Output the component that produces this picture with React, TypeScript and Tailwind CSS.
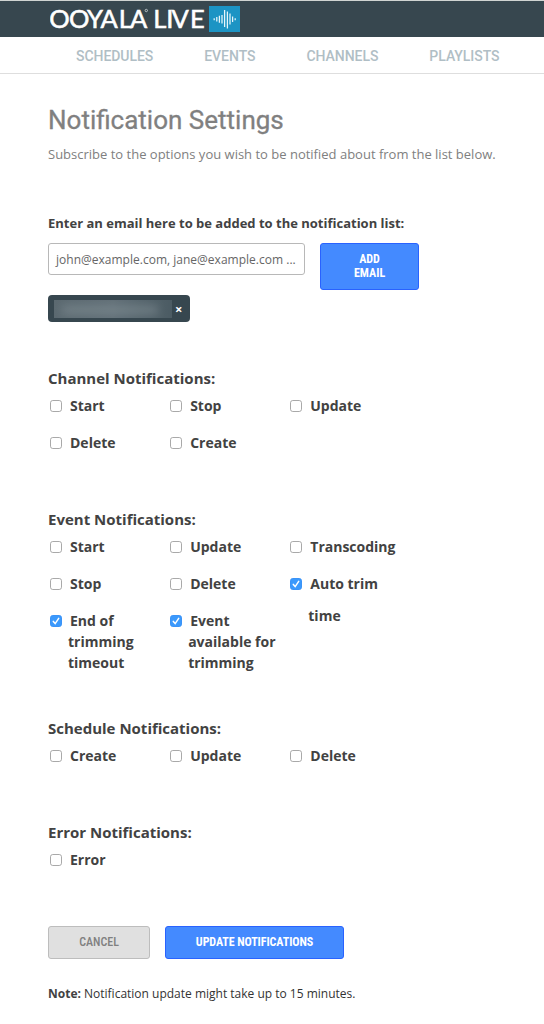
import React from "react";

const OPEN = "font-['Open_Sans','Noto_Sans',sans-serif]";
const CONDENSED = "font-['Roboto_Condensed','Roboto',sans-serif] [font-stretch:75%]";

function Box({ checked = false }: { checked?: boolean }) {
  return (
    <svg className="mt-[5px] ml-[2px] block h-3 w-3 shrink-0" viewBox="0 0 12 12">
      <rect x="0.5" y="0.5" width="11" height="11" rx="2.3" fill={checked ? "#3b99fc" : "#fff"} stroke={checked ? "#3b93f7" : "#a9a9a9"} />
      {checked && <path d="M3.3 6.4 5.2 8.6 8.7 3.4" fill="none" stroke="#fff" strokeWidth="1.5" strokeLinecap="round" />}
    </svg>
  );
}

type Item = { lines: string[]; checked?: boolean; loose?: boolean };

function Option({ lines, checked, loose }: Item) {
  return (
    <label className="flex w-[120.15px]">
      <Box checked={checked} />
      <span className={`block pl-[6px] text-[14px] whitespace-nowrap ${loose ? "-mt-[5.5px] leading-8" : "leading-[21px]"}`}>
        {lines.map((line, i) => (
          <span key={line} className={i === 0 ? "block pl-[2px]" : "block"}>{line}</span>
        ))}
      </span>
    </label>
  );
}

function Section({ title, rows, className }: { title: string; rows: Item[][]; className: string }) {
  return (
    <section className={`font-bold text-[#424242] ${className}`}>
      <h2 className="mb-[6px] text-[15px] leading-[22px]">{title}</h2>
      {rows.map((row, i) => (
        <div key={i} className="flex h-[37px] items-start">
          {row.map((item) => (
            <Option key={item.lines[0]} {...item} />
          ))}
        </div>
      ))}
    </section>
  );
}

function Logo() {
  return (
    <svg className="block h-[36px] w-[190px]" viewBox="50 1 190 36">
      <g fill="#fff" stroke="#fff" strokeWidth=".55" fontFamily="Lato, sans-serif" fontSize="25.5">
        <text y="28" x="49.2 69 87 100.5 118.8 130">OOYALA</text>
        <text y="28" x="153.3 166.3 171.5 190">LIVE</text>
      </g>
      <circle cx="146.3" cy="10.5" r="1.2" fill="none" stroke="#cfd5d8" strokeWidth=".8" />
      <rect x="209" y="6" width="31" height="26" fill="#1c94c4" />
      <path d="M214.2 18.2v2M216.8 17v4.5M219.4 15.8v7M222 15v8.5M224.6 10v17M227.4 11.5v17M230 13.5v11M232.6 16.5v5.5M235.2 18.2v2" stroke="#e6f5fa" strokeWidth="1.25" />
    </svg>
  );
}

export default function App() {
  return (
    <div className={`h-[1024px] w-[544px] overflow-hidden bg-white ${OPEN}`}>
      <header className="h-[37px] border-t border-[#d0d4d2] bg-[#37474f] pl-[50px]">
        <Logo />
      </header>
      <nav className="flex h-[37px] gap-[51px] border-b border-[#dedede] pl-[76px] font-['Roboto',sans-serif] text-[14px] leading-[38px] font-medium tracking-[-0.05px] text-[#b0bec5]">
        <a>SCHEDULES</a>
        <a>EVENTS</a>
        <a>CHANNELS</a>
        <a>PLAYLISTS</a>
      </nav>
      <main className="pl-12">
        <h1 className="h-[70px] pt-[29px] font-['Roboto',sans-serif] text-[26px] leading-[34px] text-[#808080] [-webkit-text-stroke:0.3px_#808080]">Notification Settings</h1>
        <p className="h-[69px] text-[13px] leading-[20px] text-[#808080]">Subscribe to the options you wish to be notified about from the list below.</p>
        <p className="h-[30px] text-[13px] leading-5 font-bold text-[#424242]">Enter an email here to be added to the notification list:</p>
        <div className="flex h-[52px] items-start">
          <div className="h-8 w-[257px] rounded-[3px] border border-[#b8b8b8] pl-[7px] text-[12px] leading-[31px] tracking-[0.01px] whitespace-nowrap text-[#666]">john@example.com, jane@example.com ...</div>
          <button className={`ml-[15px] h-[47px] w-[99px] rounded-[3px] border border-[#2962ff] bg-[#448aff] pb-[2px] text-center text-[12px] leading-[14px] font-bold text-white ${CONDENSED}`}>
            ADD<br />EMAIL
          </button>
        </div>
        <div className="flex h-[27px] w-[142px] items-center rounded-[4px] bg-[#37474f] pl-[6px] text-white">
          <div className="h-[18px] w-[118px] overflow-hidden bg-gradient-to-r from-[#5b6970] via-[#627078] to-[#4b5b63]">
            <div className="mt-[6px] ml-[8px] h-[8px] w-[96px] bg-[#87949a] opacity-50 blur-[4px]" />
          </div>
          <span className="ml-[3px] pt-[1px] text-[13px] leading-none font-bold">×</span>
        </div>
        <Section className="mt-[45px] h-[141px]" title="Channel Notifications:" rows={[
          [{ lines: ["Start"] }, { lines: ["Stop"] }, { lines: ["Update"] }],
          [{ lines: ["Delete"] }, { lines: ["Create"] }],
        ]} />
        <Section className="h-[209px]" title="Event Notifications:" rows={[
          [{ lines: ["Start"] }, { lines: ["Update"] }, { lines: ["Transcoding"] }],
          [{ lines: ["Stop"] }, { lines: ["Delete"] }, { lines: ["Auto trim", "time"], checked: true, loose: true }],
          [{ lines: ["End of", "trimming", "timeout"], checked: true }, { lines: ["Event", "available for", "trimming"], checked: true }],
        ]} />
        <Section className="h-[104px]" title="Schedule Notifications:" rows={[[{ lines: ["Create"] }, { lines: ["Update"] }, { lines: ["Delete"] }]]} />
        <Section className="h-[105px]" title="Error Notifications:" rows={[[{ lines: ["Error"] }]]} />
        <div className={`flex gap-[15px] text-[12px] ${CONDENSED}`}>
          <button className="h-[33px] w-[102px] rounded-[3px] border border-[#bdbdbd] bg-[#e0e0e0] pb-[2px] font-medium text-[#808080]">CANCEL</button>
          <button className="h-[33px] w-[179px] rounded-[3px] border border-[#2962ff] bg-[#448aff] pb-[2px] font-bold tracking-[-0.08px] text-white">UPDATE NOTIFICATIONS</button>
        </div>
        <p className="mt-[25px] text-[12px] leading-5 text-[#333]"><b className="text-[#424242]">Note:</b> Notification update might take up to 15 minutes.</p>
      </main>
    </div>
  );
}
